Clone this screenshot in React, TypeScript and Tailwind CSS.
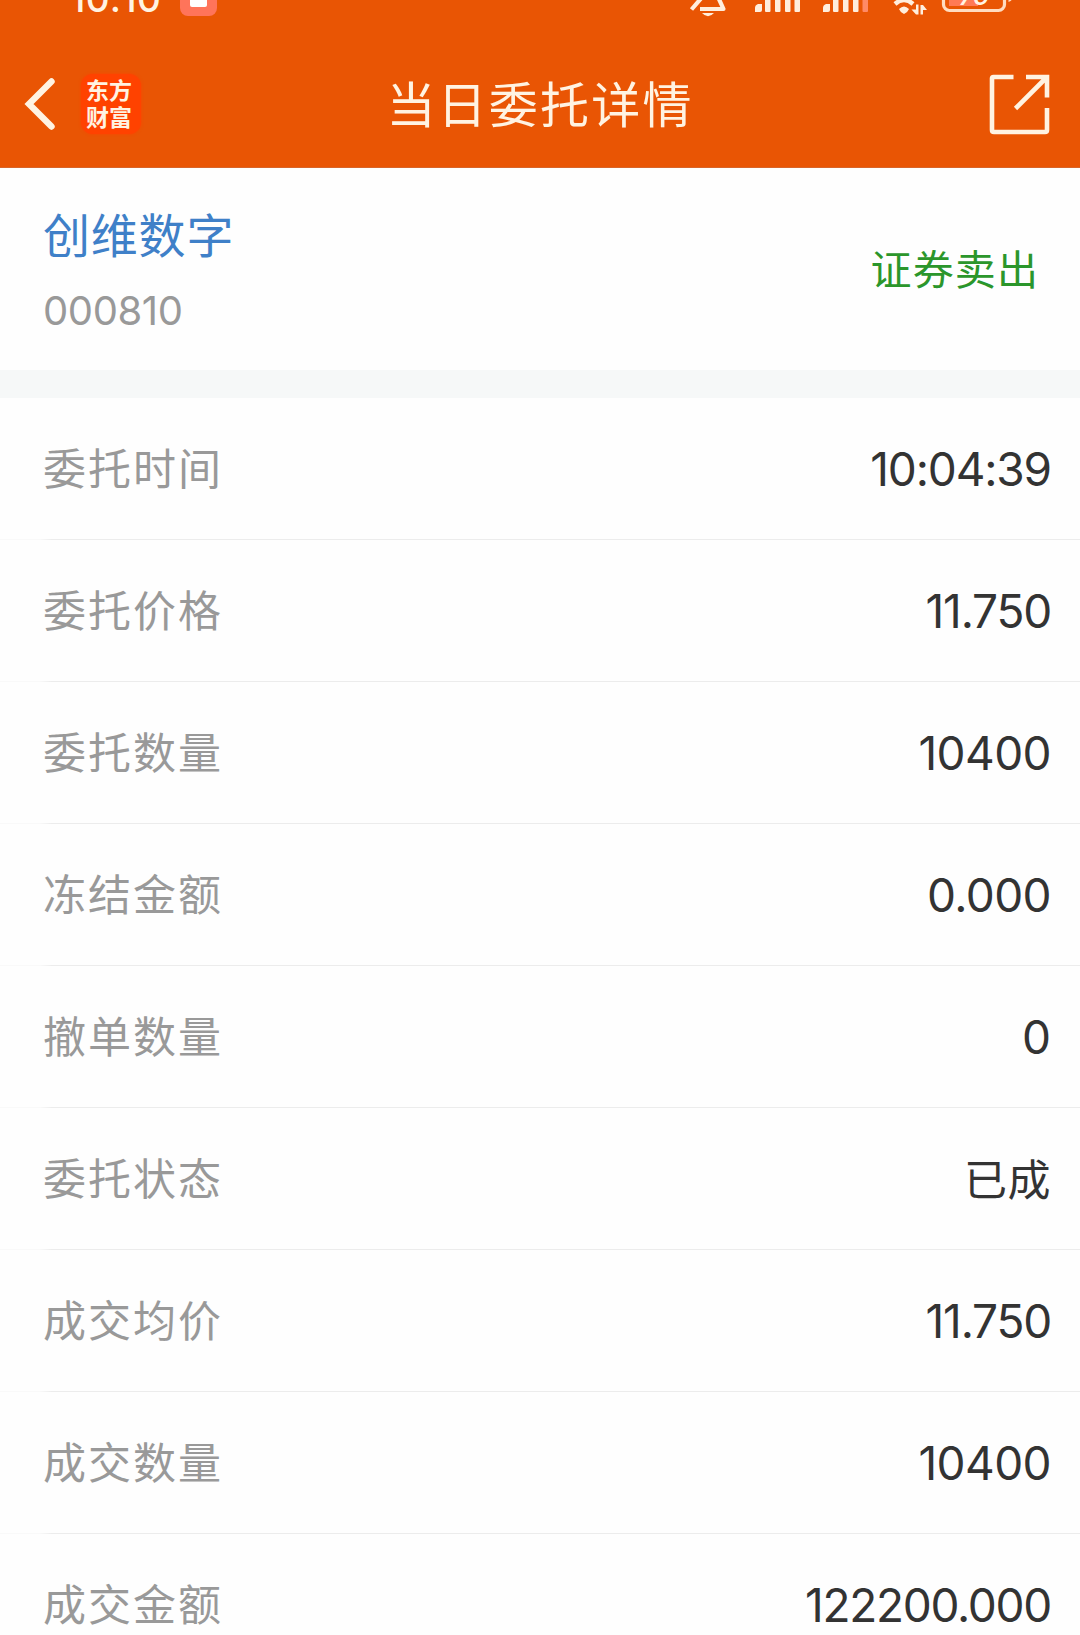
const rows = [
  { label: '委托时间', value: '10:04:39', tone: 'text-[46px] tracking-[-1.15px]' },
  { label: '委托价格', value: '11.750', tone: 'text-[46px] tracking-[-1.2px]' },
  { label: '委托数量', value: '10400', tone: 'text-[46px] tracking-[-0.6px]' },
  { label: '冻结金额', value: '0.000', tone: 'text-[46px] tracking-[-0.6px]' },
  { label: '撤单数量', value: '0', tone: 'text-[46px]' },
  { label: '委托状态', value: '已成', tone: 'relative top-[1px] text-[43px] tracking-[0.5px]' },
  { label: '成交均价', value: '11.750', tone: 'text-[46px] tracking-[-1.2px]' },
  { label: '成交数量', value: '10400', tone: 'text-[46px] tracking-[-0.6px]' },
  { label: '成交金额', value: '122200.000', tone: 'text-[46px] tracking-[-1.3px]' },
];

function StatusBar() {
  return (
    <div className="relative h-[42px] overflow-hidden">
      <span className="absolute left-[70px] top-[-20px] text-[37px] leading-[38px] font-medium tracking-[0.300px] whitespace-nowrap">10:10</span>
      <div className="absolute left-[180px] top-[-21px] flex h-[37px] w-[37px] items-center justify-center rounded-[8px] bg-[#ff745a]">
        <div className="mt-[2px] h-[17px] w-[17px] rounded-[2px] bg-white" />
      </div>
      <svg className="absolute left-[660px] top-0" width="420" height="20" viewBox="0 0 420 20" fill="none">
        <path d="M31.500 9.500 L44 -5 M40 9 H63.500 L58 -3" stroke="#ffeedd" strokeWidth="4.200" strokeLinejoin="round" />
        <path d="M42 13 H54 Q48 19.500 42 13Z" fill="#ffeedd" />
        <g fill="#ffeedd">
          <path d="M95 12V8q0-3 3-4h4v6q0 2-2 2z" />
          <rect x="105" y="-6" width="5.500" height="18" rx="1" />
          <rect x="115" y="-6" width="5.500" height="18" rx="1" />
          <rect x="125" y="-6" width="5.500" height="18" rx="1" />
          <rect x="134.500" y="-6" width="5.500" height="18" rx="1" />
          <path d="M163 12V8q0-3 3-4h4v6q0 2-2 2z" />
          <rect x="173" y="-6" width="5.500" height="18" rx="1" />
          <rect x="183" y="-6" width="5.500" height="18" rx="1" />
          <rect x="193" y="-6" width="5.500" height="18" rx="1" />
          <path d="M239 9 Q244 4 249 9 Q248 12 244 14 Q240 12 239 9Z" />
          <path d="M256 4.500 h2.500 v10 h-2.500 l-4.500 -5 h4.500z M260.500 14.500 h2.500 v-4.500 h4 l-4 -5 h-2.500z" />
        </g>
        <rect x="202.500" y="-6" width="5.500" height="18" rx="1" fill="#ff8a66" />
        <path d="M235 4 Q244 -4 253 4" stroke="#ffeedd" strokeWidth="4.400" />
        <rect x="289" y="-10" width="29" height="16" fill="#ff7a55" />
        <rect x="283.500" y="-18" width="61" height="28.500" rx="6" stroke="#ffdcc0" strokeWidth="3.200" />
        <path d="M348.500 -4 Q355 0 348.500 2Z" fill="#ffdcc0" />
      </svg>
      <span className="absolute left-[959px] top-[-18px] text-[27px] leading-[28px] font-medium tracking-[-1.500px] italic">70</span>
    </div>
  );
}

function AppBadge() {
  return (
    <div className="ml-[25px] h-[60px] w-[60px] rounded-[12px] bg-[#ff4200] pt-[2px] pl-[5px] font-['Noto_Sans_CJK_SC',sans-serif] text-[23px] leading-[27px] font-bold shadow-[0_0_3px_#ff4200]">
      <span className="block">东方</span>
      <span className="block">财富</span>
    </div>
  );
}

export default function App() {
  return (
    <div className="h-[1635px] w-[1080px] overflow-hidden bg-[#fefefe] font-['Inter','Noto_Sans_CJK_SC',sans-serif] text-[#333]">
      <header className="h-[168px] border-b border-[#d8652a] bg-[#e95504] text-[#fff3e2]">
        <StatusBar />
        <div className="relative flex h-[125px] items-center justify-between pr-[30px] pl-[23px]">
          <div className="flex items-center pb-px">
            <svg width="33" height="54" viewBox="0 0 33 54" fill="none" stroke="#fff3e2" strokeWidth="6.400" strokeLinecap="round" strokeLinejoin="miter">
              <path d="M28.500 4.500 L6 27 L28.500 49.500" />
            </svg>
            <AppBadge />
          </div>
          <h1 className="absolute inset-x-0 pb-[5px] text-center font-['Noto_Sans_CJK_SC',sans-serif] text-[49px] leading-[60px] tracking-[2.200px]">当日委托详情</h1>
          <svg width="61" height="61" viewBox="0 0 61 61" fill="none" stroke="#fff3e2" strokeWidth="4.600">
            <path d="M24.500 3 H4.500 Q3 3 3 4.500 V56 Q3 58 5 58 H56 Q58 58 58 56 V34" />
            <path d="M37 3 H58 V23.500 M57.500 3.500 L26.500 34.500" />
          </svg>
        </div>
      </header>

      <section className="flex h-[202px] items-center justify-between pr-[41px] pl-[43px]">
        <div className="pb-[2px]">
          <h2 className="font-['Noto_Sans_CJK_SC',sans-serif] text-[47px] leading-[66px] tracking-[0.800px] text-[#3f80c8]">创维数字</h2>
          <p className="mt-[20px] text-[40px] leading-[50px] tracking-[-0.400px] text-[#999]">000810</p>
        </div>
        <span className="pb-[4px] font-['Noto_Sans_CJK_SC',sans-serif] text-[41px] leading-[60px] tracking-[1.100px] text-[#2b962b]">证券卖出</span>
      </section>

      <div className="h-[28px] bg-[#f6f8f8]" />

      <dl>
        {rows.map((row) => (
          <div key={row.label} className="relative flex h-[142px] items-center justify-between pr-[29px] pb-px pl-[43px]">
            <dt className="pb-[5px] font-['Noto_Sans_CJK_SC',sans-serif] text-[43px] leading-[60px] tracking-[2px] text-[#999]">{row.label}</dt>
            <dd className={`leading-[60px] ${row.tone}`}>{row.value}</dd>
            <div className="absolute inset-x-0 bottom-0 h-px bg-linear-to-r from-[#f9f9f9] from-[40px] to-[#ececec] to-[52px]" />
          </div>
        ))}
      </dl>
    </div>
  );
}
